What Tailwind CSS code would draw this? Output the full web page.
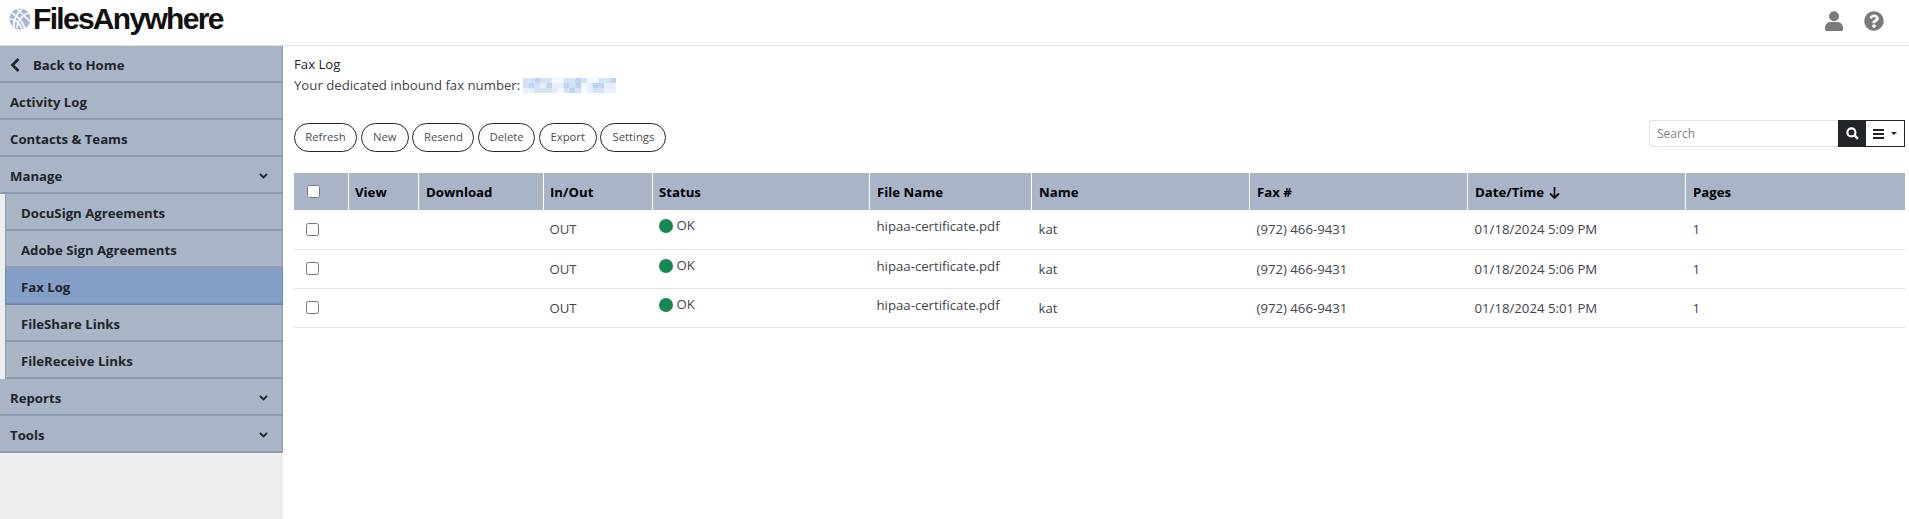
<!DOCTYPE html>
<html lang="en">
<head>
  <meta charset="UTF-8">
  <meta name="viewport" content="width=device-width, initial-scale=1.0">
  <script src="https://cdn.jsdelivr.net/npm/@tailwindcss/browser@4"></script>
  <title>Fax Log</title>
</head>
<body class="bg-white text-[#212529] font-['Open_Sans','Noto_Sans',sans-serif] text-[13.2px] overflow-hidden">
  <header class="h-[46px] border-b border-[#dee2e6] flex items-center justify-between pl-[9px] pr-[25px]">
    <div class="flex items-center gap-[2px] mb-[7px]">
      <svg class="w-[22px] h-[22px]" viewBox="0 0 22 22" fill="none">
        <circle cx="11" cy="11" r="10.5" fill="#a3b8d8"/>
        <path d="M3 5c5 3 11 9 13 16M8 1c4 4 9 9 13 12M1 11c4 0 10 3 12 10M13 1c-5 4-9 11-8 18M20 5c-6 1-12 8-12 15" stroke="#fff" stroke-width="1.700"/>
      </svg>
      <span class="font-['Liberation_Sans',sans-serif] font-bold text-[30px] leading-none tracking-[-1.700px] text-[#111]">FilesAnywhere</span>
    </div>
    <div class="flex items-center gap-[21px] mb-[3px]">
      <svg class="w-[18px] h-[20px]" viewBox="0 0 18 20" fill="#7a7a7a"><circle cx="9" cy="5.200" r="5"/><path d="M0 17c0-4 3-6 5.500-6h7c2.500 0 5.500 2 5.500 6v1.500c0 .8-.6 1.500-1.500 1.500h-15C.6 20 0 19.300 0 18.500z"/></svg>
      <svg class="w-[20px] h-[20px]" viewBox="0 0 512 512" fill="#7a7a7a"><path d="M504 256c0 137-111 248-248 248S8 393 8 256 119 8 256 8s248 111 248 248zM262.700 90c-54.500 0-89.300 23-116.500 63.800-3.500 5.300-2.400 12.400 2.700 16.300l34.700 26.300c5.200 3.900 12.600 3 16.700-2.100 17.900-22.700 30.100-35.800 57.300-35.800 20.400 0 45.700 13.100 45.700 32.900 0 14.900-12.300 22.600-32.400 33.900C247.400 238.300 216 254.800 216 296v4c0 6.600 5.400 12 12 12h56c6.600 0 12-5.400 12-12v-1.300c0-28.600 83.500-29.800 83.500-107.100 0-58.200-60.400-102.600-116.800-102.600zM256 338.900c-25.500 0-46.200 20.700-46.200 46.200s20.700 46.200 46.200 46.200 46.200-20.700 46.200-46.200-20.700-46.200-46.200-46.200z"/></svg>
    </div>
  </header>

  <div class="flex h-[473px]">
    <aside class="w-[283px] shrink-0 bg-[#eeeeee] font-bold text-[#212529]">
      <a class="h-[37px] pt-[4px] flex items-center pl-[10px] pr-[14px] bg-[#a9b4c7] border-b-2 border-r border-[#8e9cb2]">
        <svg class="w-[10px] h-[14px] mr-[13px] -mt-[2px]" viewBox="0 0 10 14" fill="none"><path d="M8.500 1 2.500 7 8.500 13" stroke="#212529" stroke-width="2.600"/></svg>Back to Home
      </a>
      <a class="h-[37px] pt-[4px] flex items-center pl-[10px] pr-[14px] bg-[#a9b4c7] border-b-2 border-r border-[#8e9cb2]">Activity Log</a>
      <a class="h-[37px] pt-[4px] flex items-center pl-[10px] pr-[14px] bg-[#a9b4c7] border-b-2 border-r border-[#8e9cb2]">Contacts &amp; Teams</a>
      <a class="h-[37px] pt-[4px] flex items-center justify-between pl-[10px] pr-[14px] bg-[#a9b4c7] border-b-2 border-r border-[#8e9cb2]">Manage
        <svg class="w-[9px] h-[6px] -mt-[2px]" viewBox="0 0 9 6" fill="none"><path d="M1 1l3.500 3.500L8 1" stroke="#212529" stroke-width="1.800"/></svg>
      </a>
      <div class="pl-[5px]">
        <a class="h-[37px] pt-[4px] flex items-center pl-[15px] bg-[#a9b4c7] border-b-2 border-r border-l border-[#8e9cb2]">DocuSign Agreements</a>
        <a class="h-[37px] pt-[4px] flex items-center pl-[15px] bg-[#a9b4c7] border-b-2 border-r border-l border-[#8e9cb2]">Adobe Sign Agreements</a>
        <a class="h-[37px] pt-[4px] flex items-center pl-[15px] bg-[#849fc6] border-b-2 border-r border-l border-[#6f8ab1]">Fax Log</a>
        <a class="h-[37px] pt-[4px] flex items-center pl-[15px] bg-[#a9b4c7] border-b-2 border-r border-l border-[#8e9cb2]">FileShare Links</a>
        <a class="h-[37px] pt-[4px] flex items-center pl-[15px] bg-[#a9b4c7] border-b-2 border-r border-l border-[#8e9cb2]">FileReceive Links</a>
      </div>
      <a class="h-[37px] pt-[4px] flex items-center justify-between pl-[10px] pr-[14px] bg-[#a9b4c7] border-b-2 border-r border-[#8e9cb2]">Reports
        <svg class="w-[9px] h-[6px] -mt-[2px]" viewBox="0 0 9 6" fill="none"><path d="M1 1l3.500 3.500L8 1" stroke="#212529" stroke-width="1.800"/></svg>
      </a>
      <a class="h-[37px] pt-[4px] flex items-center justify-between pl-[10px] pr-[14px] bg-[#a9b4c7] border-b-2 border-r border-[#8e9cb2]">Tools
        <svg class="w-[9px] h-[6px] -mt-[2px]" viewBox="0 0 9 6" fill="none"><path d="M1 1l3.500 3.500L8 1" stroke="#212529" stroke-width="1.800"/></svg>
      </a>
    </aside>

    <main class="flex-1 pl-[11px] pr-[4px] pt-[8px]">
      <p class="leading-[21px]">Fax Log</p>
      <p class="leading-[21px] flex items-center text-[#3f444a]">Your dedicated inbound fax number:
        <svg id="blur" class="ml-[3px] w-[93px] h-[15px]" viewBox="0 0 93 15"></svg>
      </p>
      <div class="mt-[27px] flex items-center justify-between h-[29px]">
        <div class="flex gap-[3.700px] text-[11.300px] text-[#4a4f55]">
          <button class="h-[29px] w-[63px] rounded-full border border-[#212529]">Refresh</button>
          <button class="h-[29px] w-[48px] rounded-full border border-[#212529]">New</button>
          <button class="h-[29px] w-[62px] rounded-full border border-[#212529]">Resend</button>
          <button class="h-[29px] w-[57px] rounded-full border border-[#212529]">Delete</button>
          <button class="h-[29px] w-[58px] rounded-full border border-[#212529]">Export</button>
          <button class="h-[29px] w-[66px] rounded-full border border-[#212529]">Settings</button>
        </div>
        <div class="flex h-[27px] -mt-[8px]">
          <div class="w-[189px] border border-r-0 border-[#dee2e6] rounded-l-[4px] pl-[7px] flex items-center text-[12px] text-[#7b838a]">Search</div>
          <div class="w-[28px] bg-[#212529] flex items-center justify-center">
            <svg class="w-[13px] h-[13px]" viewBox="0 0 12 12" fill="none"><circle cx="5" cy="5" r="3.700" stroke="#fff" stroke-width="2"/><path d="M7.800 7.800 11 11" stroke="#fff" stroke-width="2.400"/></svg>
          </div>
          <div class="w-[39px] border border-l-0 border-[#212529] flex items-center justify-center gap-[7px]">
            <svg class="w-[11px] h-[10px]" viewBox="0 0 11 10" fill="#212529"><rect width="11" height="2"/><rect y="4" width="11" height="2"/><rect y="8" width="11" height="2"/></svg>
            <span class="w-0 h-0 border-x-[3px] border-x-transparent border-t-[3px] border-t-[#212529]"></span>
          </div>
        </div>
      </div>

      <table class="mt-[21px] -ml-[1px] w-[1611px] table-fixed border-collapse text-[#3f444a] text-left">
        <colgroup>
          <col class="w-[55px]"><col class="w-[70px]"><col class="w-[125px]"><col class="w-[109px]"><col class="w-[217px]"><col class="w-[162px]"><col class="w-[218px]"><col class="w-[218px]"><col class="w-[218px]"><col class="w-[219px]">
        </colgroup>
        <thead class="text-black">
          <tr class="h-[37px]">
            <th class="pl-[13px] pb-[1px] bg-[#a9b4c7] border-l border-l-white border-r border-white"><input type="checkbox" class="block w-[13px] h-[13px]"></th>
            <th class="pl-[6px] pt-[3px] font-bold bg-[#a9b4c7] border-r border-white">View</th>
            <th class="pl-[7px] pt-[3px] font-bold bg-[#a9b4c7] border-r border-white">Download</th>
            <th class="pl-[6px] pt-[3px] font-bold bg-[#a9b4c7] border-r border-white">In/Out</th>
            <th class="pl-[6px] pt-[3px] font-bold bg-[#a9b4c7] border-r border-white">Status</th>
            <th class="pl-[7px] pt-[3px] font-bold bg-[#a9b4c7] border-r border-white">File Name</th>
            <th class="pl-[7px] pt-[3px] font-bold bg-[#a9b4c7] border-r border-white">Name</th>
            <th class="pl-[7px] pt-[3px] font-bold bg-[#a9b4c7] border-r border-white">Fax #</th>
            <th class="pl-[7px] pt-[3px] font-bold bg-[#a9b4c7] border-r border-white"><span class="inline-flex items-center gap-[5px]">Date/Time
              <svg class="w-[11px] h-[12px]" viewBox="0 0 11 12" fill="none"><path d="M5.500 0v11M1 6.500l4.500 4.500L10 6.500" stroke="#111" stroke-width="1.800"/></svg></span></th>
            <th class="pl-[7px] pt-[3px] font-bold bg-[#a9b4c7]">Pages</th>
          </tr>
        </thead>
        <tbody id="rows"></tbody>
      </table>
    </main>
  </div>

<script>
// rows of the log
const rows = ['01/18/2024 5:09 PM', '01/18/2024 5:06 PM', '01/18/2024 5:01 PM'];

document.querySelector('#rows').innerHTML = rows.map(date => `
  <tr class="h-[39px] border-b border-[#dee2e6]">
    <td class="pl-[12px]"><input type="checkbox" class="block w-[13px] h-[13px]"></td>
    <td></td>
    <td></td>
    <td class="pl-[6px] pt-[2px]">OUT</td>
    <td class="pl-[6px] pb-[3px]"><span class="inline-flex items-center gap-[4px]"><span class="w-[14px] h-[14px] rounded-full bg-[#198754]"></span>OK</span></td>
    <td class="pl-[7px] pb-[4px]">hipaa-certificate.pdf</td>
    <td class="pl-[7px] pt-[2px]">kat</td>
    <td class="pl-[7px] pt-[2px]">(972) 466-9431</td>
    <td class="pl-[7px] pt-[2px]">${date}</td>
    <td class="pl-[7px] pt-[2px]">1</td>
  </tr>`).join('');

// pixelated fax number
const shades = { a: '#e6effa', b: '#d3e2f6', c: '#bcd3f1', d: '#f5f8fd' };
const blur = ['bbcbbddbbcbddbbc', 'bcbacaacbcdaccaa', 'aabbbadbcbdabbaa'];
document.querySelector('#blur').innerHTML = blur.map((line, y) =>
  [...line].map((s, x) => `<rect x="${x * 5.8125}" y="${y * 5}" width="5.9" height="5" fill="${shades[s]}"/>`).join('')
).join('');
</script>
</body>
</html>
